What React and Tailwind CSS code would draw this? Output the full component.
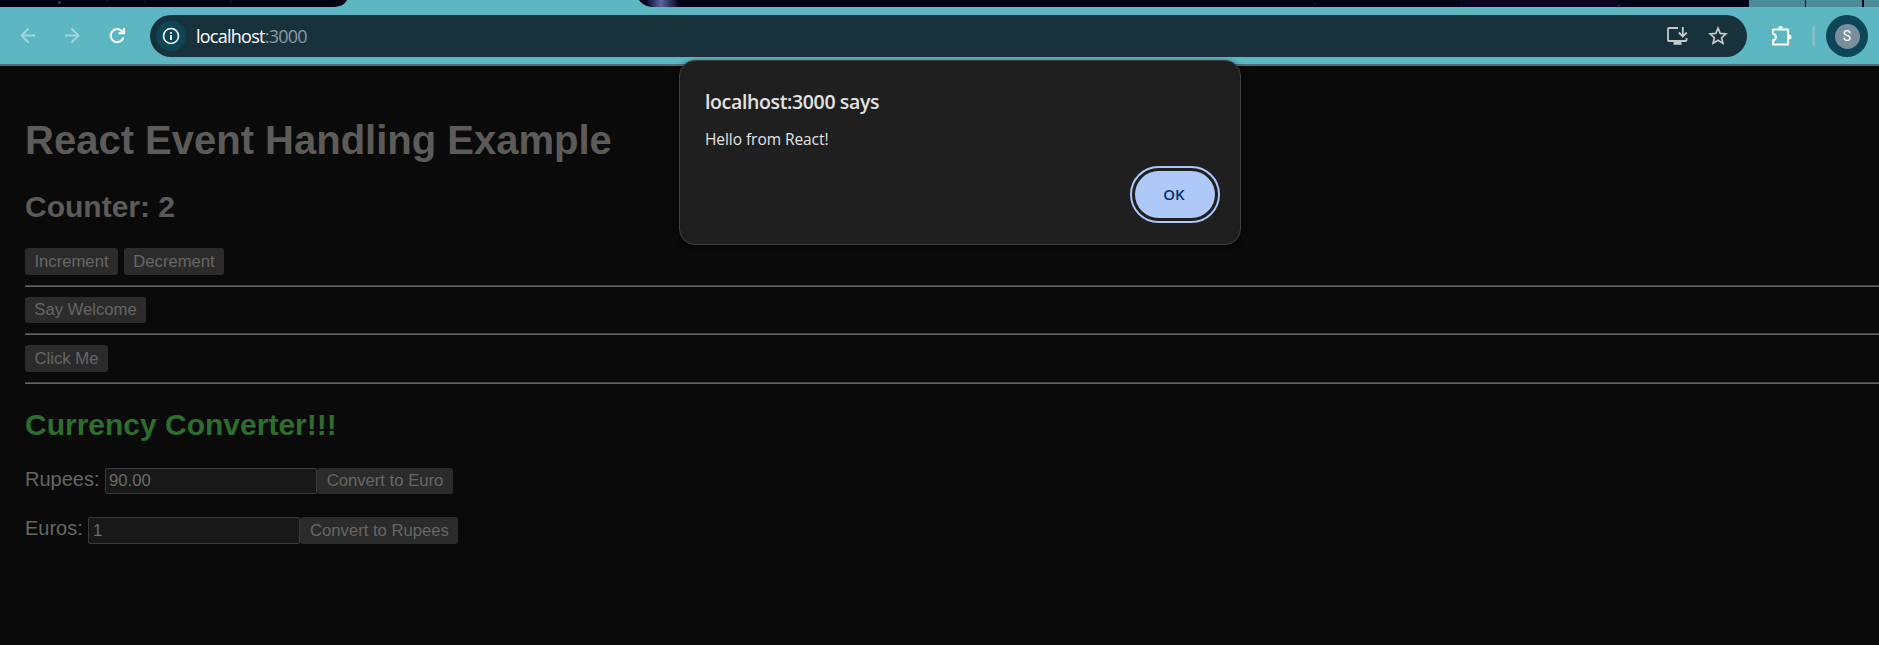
import React from "react";

const ui = "font-['Open_Sans','Noto_Sans',sans-serif]";

function TabStrip() {
  return (
    <div className="flex h-[7px] bg-[#5cb7c3]">
      <svg className="block shrink-0" width="1749" height="7" viewBox="0 0 1749 7">
        <defs>
          <linearGradient id="nebula" x1="0" x2="1" y1="0" y2="0">
            <stop offset="0" stopColor="#10143c" />
            <stop offset=".4" stopColor="#59639a" />
            <stop offset="1" stopColor="#020118" />
          </linearGradient>
        </defs>
        <path d="M0 0H347C344 5 340 7 332 7H0Z" fill="#020212" />
        <path d="M639 0H1749V7H654C646 7 642 4 639 0Z" fill="#020118" />
        <path d="M648 0H676L680 7H654L648 5Z" fill="url(#nebula)" />
        <path d="M1460 0H1620V7H1460Z" fill="#150c2c" opacity=".4" />
        <g fill="#777">
          <circle cx="59.500" cy="2.500" r="1" />
          <circle cx="107" cy="1" r=".6" opacity=".5" />
          <circle cx="145" cy="2" r=".7" opacity=".4" />
          <circle cx="231" cy="1.500" r=".7" opacity=".6" />
          <circle cx="1315" cy="3.500" r=".7" opacity=".4" />
          <circle cx="1619" cy="5.500" r=".8" opacity=".5" />
        </g>
      </svg>
      <div className="h-full w-14 bg-[#4b8a97]" />
      <div className="h-full w-px bg-[#020118]" />
      <div className="h-full w-14 bg-[#4b8a97]" />
      <div className="h-full w-0.5 bg-[#020118]" />
      <div className="h-full grow bg-[#4b8a97]" />
    </div>
  );
}

function Toolbar() {
  return (
    <div className="flex h-[59px] items-start border-b-2 border-[#45717c] bg-[#5cb7c3] pt-2">
      <div className="flex h-[42px] w-[150px] shrink-0 items-center">
        <svg className="ml-[17px]" width="22" height="22" viewBox="0 0 22 22" fill="none" stroke="#a3d5dc" strokeWidth="1.800">
          <path d="M18 10.500H4.500M11.500 3.500L4.500 10.500L11.500 17.500" />
        </svg>
        <svg className="ml-[23px]" width="22" height="22" viewBox="0 0 22 22" fill="none" stroke="#a3d5dc" strokeWidth="1.800">
          <path d="M3 10.500H16.500M9.500 3.500L16.500 10.500L9.500 17.500" />
        </svg>
        <svg className="ml-[22px]" width="24" height="24" viewBox="0 0 24 24" fill="none" stroke="#fff" strokeWidth="2">
          <path d="M17.400 13.500A6.500 6.500 0 1 1 16.200 7.500L17.500 9" />
          <path d="M18 4V9.200H12.500" />
        </svg>
      </div>
      <div className="flex h-[42px] w-[1597px] shrink-0 items-center rounded-full bg-[#18323c] pl-1.5">
        <div className="flex size-[30px] items-center justify-center rounded-full bg-[#0c4657]">
          <svg width="18" height="18" viewBox="0 0 18 18">
            <circle cx="9" cy="9" r="7.500" fill="none" stroke="#fff" strokeWidth="1.600" />
            <path d="M9 8V13M9 5V6.800" stroke="#fff" strokeWidth="1.800" />
          </svg>
        </div>
        <div className={`${ui} ml-[10px] grow text-[18px] leading-[24px] tracking-[-0.75px] text-white`}>
          localhost<span className="text-[#8d999e]">:3000</span>
        </div>
        <svg className="mr-[20px]" width="22" height="20" viewBox="0 0 22 20" fill="none" stroke="#c7c7c7" strokeWidth="1.800">
          <path d="M12 2H3Q2 2 2 3V14Q2 15 3 15H19.500Q20.500 15 20.500 14V12" />
          <path d="M16.800 1V10M12.800 6.500L16.800 10.500L20.800 6.500" />
          <path d="M7.500 16H15.500V18.800H7.500Z" fill="#c7c7c7" stroke="none" />
        </svg>
        <svg className="mr-[19px]" width="20" height="20" viewBox="0 0 20 20" fill="none" stroke="#c7c7c7" strokeWidth="1.700">
          <path d="M10 2.200L12.200 7.400L17.900 7.900L13.600 11.700L14.900 17.200L10 14.300L5.100 17.200L6.400 11.700L2.100 7.900L7.800 7.400Z" />
        </svg>
      </div>
      <div className="flex h-[42px] grow items-center">
        <svg className="ml-[23px]" width="23" height="23" viewBox="0 0 23 23">
          <path d="M3 4.500H18V19.500H3V15.300C6.800 15 6.800 9 3 8.700Z" fill="none" stroke="#fff" strokeWidth="2" strokeLinejoin="round" />
          <path d="M8 3.500A2.500 2.500 0 0 1 13 3.500ZM19 9.500A2.500 2.500 0 0 1 19 14.500Z" fill="#fff" />
        </svg>
        <div className="ml-[19px] h-5 w-[3px] rounded-full bg-[#81bdc7]" />
        <div className="ml-[11px] flex size-[42px] items-center justify-center rounded-full bg-[#0c4657]">
          <div className="flex size-[25px] items-center justify-center rounded-full bg-[#78909c] font-[Roboto,sans-serif] text-[14px] text-white">
            S
          </div>
        </div>
      </div>
    </div>
  );
}

function Button({ children, className }) {
  return (
    <button className={`flex shrink-0 items-center justify-center rounded-[3px] bg-[#2b2b2b] text-[16.670px] leading-[19px] text-[#666] ${className}`}>
      {children}
    </button>
  );
}

function Rule() {
  return <div className="h-0.5 border-t border-[#424242] bg-[#646464]" />;
}

function AlertDialog() {
  return (
    <div className={`${ui} absolute top-[60px] left-[679px] flex h-[185px] w-[562px] flex-col rounded-[16px] border border-[#3e4045] bg-[#1f1f1f] px-[25px] pt-[27px] text-[#e3e3e3] shadow-[0_2px_6px_rgba(0,0,0,0.6)]`}>
      <div className="text-[19.500px] leading-7 font-semibold tracking-[-0.36px] whitespace-nowrap">localhost:3000 says</div>
      <div className="mt-[13px] text-[15.500px] leading-5 tracking-[-0.06px]">Hello from React!</div>
      <div className="mt-[17px] -mr-[5px] flex self-end rounded-[29px] border-2 border-[#a8c7fa] p-[3px]">
        <button className="flex h-[47px] w-20 items-center justify-center rounded-[24px] bg-[#aec9f8] pr-0.5 text-[15px] font-semibold text-[#062e6f]">OK</button>
      </div>
    </div>
  );
}

export default function App() {
  return (
    <div className="relative h-[645px] w-[1879px] overflow-hidden bg-[#0a0a0a] font-['Liberation_Sans',Arial,sans-serif]">
      <TabStrip />
      <Toolbar />
      <div className="flex flex-col pt-[51px] pl-[25px] text-[20px] text-[#666]">
        <h1 className="h-[46px] text-[40px] leading-[46px] font-bold whitespace-nowrap text-[#5d5b59]">React Event Handling Example</h1>
        <h2 className="mt-[27px] h-[34px] text-[30px] leading-[34px] font-bold text-[#5d5b59]">Counter: 2</h2>
        <div className="mt-[24px] flex gap-1.5">
          <Button className="h-[27px] w-[93px]">Increment</Button>
          <Button className="h-[27px] w-[100px]">Decrement</Button>
        </div>
        <div className="mt-2.5"><Rule /></div>
        <Button className="mt-2.5 h-[26px] w-[121px] pb-0.5">Say Welcome</Button>
        <div className="mt-2.5"><Rule /></div>
        <Button className="mt-2.5 h-[27px] w-[83px]">Click Me</Button>
        <div className="mt-2.5"><Rule /></div>
        <h2 className="mt-[24px] h-[34px] text-[30px] leading-[34px] font-bold text-[#2f6d2f]">Currency Converter!!!</h2>
        <div className="mt-[26px] flex h-[26px]">
          <label className="w-20 shrink-0 leading-[22px]">Rupees:</label>
          <div className="flex w-[212px] items-center rounded-[2px] border border-[#3a3a3a] bg-[#181818] pb-0.5 pl-[3px] text-[16.670px] leading-[19px] text-[#6b6b6b]">90.00</div>
          <Button className="h-[26px] w-[136px] pb-0.5">Convert to Euro</Button>
        </div>
        <div className="mt-[23px] flex h-[27px]">
          <label className="w-[63px] shrink-0 leading-[22px]">Euros:</label>
          <div className="flex w-[212px] items-center rounded-[2px] border border-[#3a3a3a] bg-[#181818] pl-1 text-[16.670px] leading-[19px] text-[#6b6b6b]">1</div>
          <Button className="h-[27px] w-[158px] pl-px">Convert to Rupees</Button>
        </div>
      </div>
      <AlertDialog />
    </div>
  );
}
